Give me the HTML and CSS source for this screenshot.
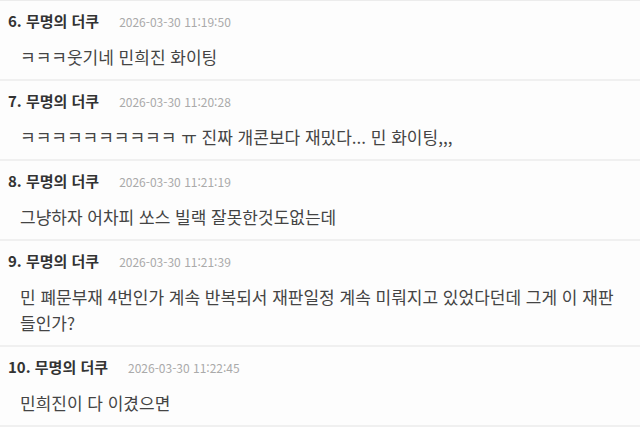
FILE: index.html
```html
<!DOCTYPE html>
<html lang="ko">
<head>
    <meta charset="UTF-8">
    <meta name="viewport" content="width=device-width, initial-scale=1.0">
    <title>댓글</title>
    <link rel="stylesheet" href="styles.css">
</head>
<body>
    <ul class="comment-list">
        <li class="comment">
            <div class="comment-head"><span class="nick">6. 무명의 더쿠</span><span class="date">2026-03-30 11:19:50</span></div>
            <div class="comment-body">ㅋㅋㅋ웃기네 민희진 화이팅</div>
        </li>
        <li class="comment">
            <div class="comment-head"><span class="nick">7. 무명의 더쿠</span><span class="date">2026-03-30 11:20:28</span></div>
            <div class="comment-body">ㅋㅋㅋㅋㅋㅋㅋㅋㅋㅋ ㅠ 진짜 개콘보다 재밌다... 민 화이팅,,,</div>
        </li>
        <li class="comment">
            <div class="comment-head"><span class="nick">8. 무명의 더쿠</span><span class="date">2026-03-30 11:21:19</span></div>
            <div class="comment-body">그냥하자 어차피 쏘스 빌랙 잘못한것도없는데</div>
        </li>
        <li class="comment">
            <div class="comment-head"><span class="nick">9. 무명의 더쿠</span><span class="date">2026-03-30 11:21:39</span></div>
            <div class="comment-body">민 폐문부재 4번인가 계속 반복되서 재판일정 계속 미뤄지고 있었다던데 그게 이 재판 들인가?</div>
        </li>
        <li class="comment">
            <div class="comment-head"><span class="nick">10. 무명의 더쿠</span><span class="date">2026-03-30 11:22:45</span></div>
            <div class="comment-body">민희진이 다 이겼으면</div>
        </li>
    </ul>
</body>
</html>
```

FILE: styles.css
```css
body {
    margin: 0;
    background-color: #fdfdfd;
    font-family: "Noto Sans CJK KR", "Noto Sans", sans-serif;
    color: #333;
}

.comment-list {
    list-style: none;
    margin: 0;
    padding: 0;
    border-top: 1px solid #ececec;
}

.comment {
    border-bottom: 2px solid #f0f0f0;
    padding: 10px 8px 9px;
}

.comment-head {
    display: flex;
    align-items: baseline;
    gap: 20px;
    line-height: 20px;
}

.nick {
    font-size: 15px;
    font-weight: bold;
    color: #333;
}

.date {
    font-size: 12px;
    color: #aaa;
}

.comment-body {
    margin-top: 12px;
    padding-left: 12px;
    font-size: 17px;
    line-height: 26px;
    color: #444;
    word-break: keep-all;
}
```
